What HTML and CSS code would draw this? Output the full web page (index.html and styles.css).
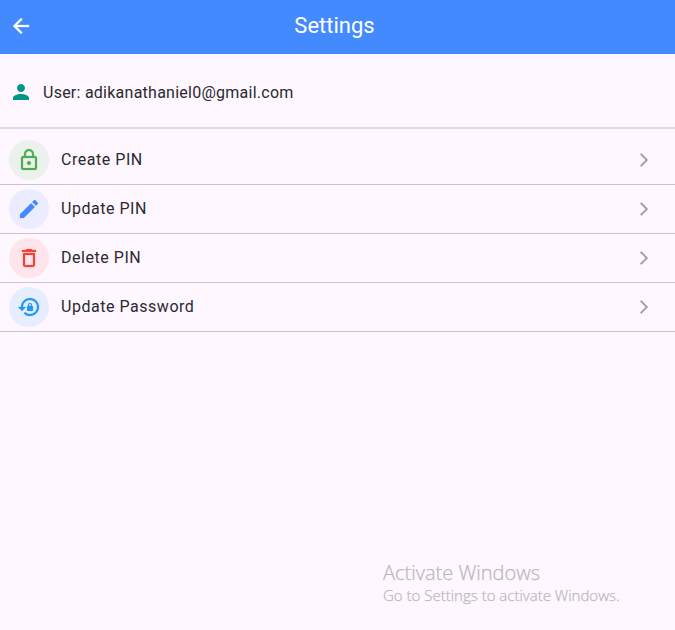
FILE: index.html
```html
<!DOCTYPE html>
<html lang="en">
<head>
<meta charset="utf-8">
<title>Settings</title>
<link rel="stylesheet" href="styles.css">
</head>
<body>
<header class="bar">
  <svg class="back" viewBox="0 0 24 24"><path d="M20 11H7.830l5.590-5.590L12 4l-8 8 8 8 1.410-1.410L7.830 13H20v-2z"/></svg>
  <h1 class="title">Settings</h1>
</header>
<section class="user">
  <svg class="person" viewBox="0 0 24 24"><path d="M12 12c2.210 0 4-1.790 4-4s-1.790-4-4-4-4 1.790-4 4 1.790 4 4 4zm0 2c-2.670 0-8 1.340-8 4v2h16v-2c0-2.660-5.330-4-8-4z"/></svg>
  <span class="email">User: adikanathaniel0@gmail.com</span>
</section>
<main class="list">
  <div class="row">
    <span class="badge green"><svg viewBox="0 0 24 24"><path d="M12 17c1.100 0 2-.9 2-2s-.9-2-2-2-2 .9-2 2 .9 2 2 2zm6-9h-1V6c0-2.760-2.240-5-5-5S7 3.240 7 6v2H6c-1.100 0-2 .9-2 2v10c0 1.100.9 2 2 2h12c1.100 0 2-.9 2-2V10c0-1.100-.9-2-2-2zM8.900 6c0-1.710 1.390-3.100 3.100-3.100s3.100 1.390 3.100 3.100v2H8.900V6zM18 20H6V10h12v10z"/></svg></span>
    <span class="label">Create PIN</span>
    <svg class="chevron" viewBox="0 0 24 24"><path d="M6.230 20.230 8 22l10-10L8 2 6.230 3.770 14.460 12z"/></svg>
  </div>
  <div class="row">
    <span class="badge blue"><svg viewBox="0 0 24 24"><path d="M3 17.250V21h3.750L17.810 9.940l-3.750-3.750L3 17.250zM20.710 7.040c.39-.39.39-1.020 0-1.410l-2.340-2.340c-.39-.39-1.020-.39-1.410 0l-1.830 1.830 3.750 3.750 1.830-1.830z"/></svg></span>
    <span class="label">Update PIN</span>
    <svg class="chevron" viewBox="0 0 24 24"><path d="M6.230 20.230 8 22l10-10L8 2 6.230 3.770 14.460 12z"/></svg>
  </div>
  <div class="row">
    <span class="badge red"><svg viewBox="0 0 24 24"><path d="M6 19c0 1.100.9 2 2 2h8c1.100 0 2-.9 2-2V7H6v12zM8 9h8v10H8V9zm7.500-5-1-1h-5l-1 1H5v2h14V4z"/></svg></span>
    <span class="label">Delete PIN</span>
    <svg class="chevron" viewBox="0 0 24 24"><path d="M6.230 20.230 8 22l10-10L8 2 6.230 3.770 14.460 12z"/></svg>
  </div>
  <div class="row">
    <span class="badge sky"><svg viewBox="0 0 24 24"><path d="M13 3c-4.970 0-9 4.030-9 9H1l4 4 4-4H6c0-3.860 3.140-7 7-7s7 3.140 7 7-3.140 7-7 7c-1.900 0-3.620-.76-4.880-1.990L6.700 18.420C8.320 20.010 10.550 21 13 21c4.970 0 9-4.030 9-9s-4.030-9-9-9zm2 8v-1c0-1.100-.9-2-2-2s-2 .9-2 2v1c-.55 0-1 .45-1 1v3c0 .55.45 1 1 1h4c.55 0 1-.45 1-1v-3c0-.55-.45-1-1-1zm-1 0h-2v-1c0-.55.45-1 1-1s1 .45 1 1v1z"/></svg></span>
    <span class="label">Update Password</span>
    <svg class="chevron" viewBox="0 0 24 24"><path d="M6.230 20.230 8 22l10-10L8 2 6.230 3.770 14.460 12z"/></svg>
  </div>
</main>
<aside class="notice">
  <div class="notice-title">Activate Windows</div>
  <div class="notice-text">Go to Settings to activate Windows.</div>
</aside>
</body>
</html>
```

FILE: styles.css
```css
* { box-sizing: border-box; }
body {
  margin: 0;
  height: 630px;
  background: #fef7ff;
  color: #2b2930;
  font-family: Roboto, sans-serif;
  display: flex;
  flex-direction: column;
}
svg { display: block; fill: currentColor; flex: none; }
.bar {
  height: 54px;
  background: #448aff;
  color: #fff;
  display: grid;
  grid-template-columns: 42px 1fr 48px;
  align-items: center;
  padding-bottom: 2px;
}
.back { width: 24px; height: 24px; margin-left: 9px; stroke: currentColor; stroke-width: 0.3px; }
.title { margin: 0; font-size: 22px; line-height: 28px; font-weight: 400; text-align: center; }
.user {
  height: 75px;
  border-bottom: 2px solid #dfd9e2;
  display: flex;
  align-items: center;
  gap: 10px;
  padding: 3px 9px 0;
}
.person { width: 24px; height: 24px; color: #009688; }
.email { font-size: 16px; letter-spacing: 0.25px; }
.list { padding-top: 7px; }
.row {
  height: 49px;
  border-bottom: 1px solid #cac4d0;
  display: flex;
  align-items: center;
  padding: 0 23px 0 9px;
}
.badge {
  width: 40px;
  height: 40px;
  border-radius: 50%;
  display: grid;
  place-items: center;
  margin-right: 12px;
}
.badge svg { width: 24px; height: 24px; stroke: currentColor; stroke-width: 0.2px; }
.green { background: #ebf1ec; color: #4caf50; }
.blue { background: #ebecff; color: #448aff; }
.red { background: #fde5eb; color: #f44336; }
.sky { background: #e5edfe; color: #2196f3; }
.label { flex: 1; font-size: 16px; letter-spacing: 0.53px; padding-bottom: 2px; }
.chevron { width: 16px; height: 16px; color: #9e9e9e; stroke: currentColor; stroke-width: 0.4px; }
.notice {
  margin: auto 0 26px 383px;
  font-family: "Open Sans", sans-serif;
  font-weight: 300;
  color: #b9b9b9;
  -webkit-text-stroke: 0.25px #b9b9b9;
}
.notice-title { font-size: 20px; line-height: 26px; }
.notice-text { font-size: 15px; line-height: 18px; }
```
